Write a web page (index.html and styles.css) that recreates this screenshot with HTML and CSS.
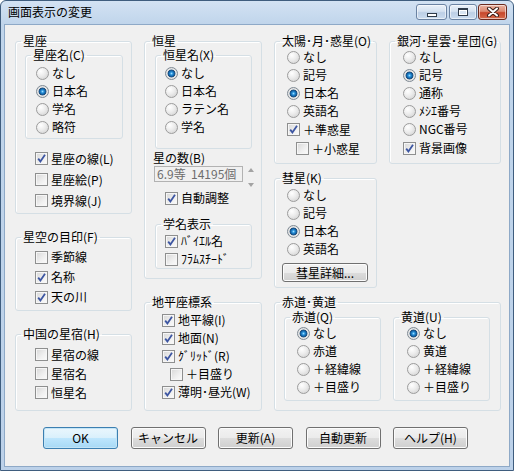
FILE: index.html
```html
<!DOCTYPE html>
<html lang="ja">
<head>
<meta charset="utf-8">
<title>画面表示の変更</title>
<link rel="stylesheet" href="styles.css">
</head>
<body>
<div class="win">
  <div class="titlebar">
    <span class="title">画面表示の変更</span>
    <div class="tbtns">
      <span class="tbtn tmin"><span class="ico-min"></span></span>
      <span class="tbtn tmax"><span class="ico-max"></span></span>
      <span class="tbtn tclose"><svg width="14" height="10" viewBox="0 0 14 10"><path d="M3 1.5 L11 8.5 M11 1.5 L3 8.5" stroke="#3a1d17" stroke-width="4" stroke-linecap="round"/><path d="M3 1.5 L11 8.5 M11 1.5 L3 8.5" stroke="#ffffff" stroke-width="2" stroke-linecap="round"/></svg></span>
    </div>
  </div>
  <div class="client">
    <div class="cols">
      <!-- column 1 -->
      <div class="col c1">
        <fieldset class="grp g-seiza">
          <legend>星座</legend>
          <fieldset class="grp sub s-seizamei">
            <legend>星座名(C)</legend>
            <div class="list pl10 pt2">
              <div class="opt"><span class="rb"></span>なし</div>
              <div class="opt"><span class="rb on"></span>日本名</div>
              <div class="opt"><span class="rb"></span>学名</div>
              <div class="opt"><span class="rb"></span>略符</div>
            </div>
          </fieldset>
          <div class="list pl19 mt9">
            <div class="opt h21"><span class="cb on"><svg width="11" height="11" viewBox="0 0 11 11"><path d="M2.2 5.6 L4.4 8.4 L9 1.8" fill="none" stroke="#3d56a2" stroke-width="1.8"/></svg></span>星座の線(L)</div>
            <div class="opt h21"><span class="cb"></span>星座絵(P)</div>
            <div class="opt h21"><span class="cb"></span>境界線(J)</div>
          </div>
        </fieldset>
        <fieldset class="grp g-mejirushi">
          <legend>星空の目印(F)</legend>
          <div class="list pl19 pt3">
            <div class="opt h20"><span class="cb"></span>季節線</div>
            <div class="opt h20"><span class="cb on"><svg width="11" height="11" viewBox="0 0 11 11"><path d="M2.2 5.6 L4.4 8.4 L9 1.8" fill="none" stroke="#3d56a2" stroke-width="1.8"/></svg></span>名称</div>
            <div class="opt h20"><span class="cb on"><svg width="11" height="11" viewBox="0 0 11 11"><path d="M2.2 5.6 L4.4 8.4 L9 1.8" fill="none" stroke="#3d56a2" stroke-width="1.8"/></svg></span>天の川</div>
          </div>
        </fieldset>
        <fieldset class="grp g-seishuku">
          <legend>中国の星宿(H)</legend>
          <div class="list pl19 pt4">
            <div class="opt h19"><span class="cb"></span>星宿の線</div>
            <div class="opt h19"><span class="cb"></span>星宿名</div>
            <div class="opt h19"><span class="cb"></span>恒星名</div>
          </div>
        </fieldset>
      </div>

      <!-- column 2 -->
      <div class="col c2">
        <fieldset class="grp g-kousei">
          <legend>恒星</legend>
          <fieldset class="grp sub s-kouseimei">
            <legend>恒星名(X)</legend>
            <div class="list pl9 pt2">
              <div class="opt"><span class="rb on"></span>なし</div>
              <div class="opt"><span class="rb"></span>日本名</div>
              <div class="opt"><span class="rb"></span>ラテン名</div>
              <div class="opt"><span class="rb"></span>学名</div>
            </div>
          </fieldset>
          <div class="numlabel">星の数(B)</div>
          <div class="numrow">
            <div class="numbox">6.9等&nbsp;&nbsp;14195個</div>
            <div class="spin"><span class="up"></span><span class="dn"></span></div>
          </div>
          <div class="list pl20 mt7">
            <div class="opt"><span class="cb on"><svg width="11" height="11" viewBox="0 0 11 11"><path d="M2.2 5.6 L4.4 8.4 L9 1.8" fill="none" stroke="#3d56a2" stroke-width="1.8"/></svg></span>自動調整</div>
          </div>
          <fieldset class="grp sub s-gakumei">
            <legend>学名表示</legend>
            <div class="list pl9 pt1">
              <div class="opt"><span class="cb on"><svg width="11" height="11" viewBox="0 0 11 11"><path d="M2.2 5.6 L4.4 8.4 L9 1.8" fill="none" stroke="#3d56a2" stroke-width="1.8"/></svg></span>ﾊﾞｲｴﾙ名</div>
              <div class="opt"><span class="cb"></span>ﾌﾗﾑｽﾁｰﾄﾞ</div>
            </div>
          </fieldset>
        </fieldset>
        <fieldset class="grp g-chihei">
          <legend>地平座標系</legend>
          <div class="list pl17 pt2">
            <div class="opt"><span class="cb on"><svg width="11" height="11" viewBox="0 0 11 11"><path d="M2.2 5.6 L4.4 8.4 L9 1.8" fill="none" stroke="#3d56a2" stroke-width="1.8"/></svg></span>地平線(I)</div>
            <div class="opt"><span class="cb on"><svg width="11" height="11" viewBox="0 0 11 11"><path d="M2.2 5.6 L4.4 8.4 L9 1.8" fill="none" stroke="#3d56a2" stroke-width="1.8"/></svg></span>地面(N)</div>
            <div class="opt"><span class="cb on"><svg width="11" height="11" viewBox="0 0 11 11"><path d="M2.2 5.6 L4.4 8.4 L9 1.8" fill="none" stroke="#3d56a2" stroke-width="1.8"/></svg></span>ｸﾞﾘｯﾄﾞ(R)</div>
            <div class="opt ind8"><span class="cb"></span>＋目盛り</div>
            <div class="opt"><span class="cb on"><svg width="11" height="11" viewBox="0 0 11 11"><path d="M2.2 5.6 L4.4 8.4 L9 1.8" fill="none" stroke="#3d56a2" stroke-width="1.8"/></svg></span>薄明･昼光(W)</div>
          </div>
        </fieldset>
      </div>

      <!-- columns 3 and 4 -->
      <div class="col c34">
        <div class="toprow">
          <fieldset class="grp g-taiyou">
            <legend>太陽･月･惑星(O)</legend>
            <div class="list pl12">
              <div class="opt"><span class="rb"></span>なし</div>
              <div class="opt"><span class="rb"></span>記号</div>
              <div class="opt"><span class="rb on"></span>日本名</div>
              <div class="opt"><span class="rb"></span>英語名</div>
              <div class="opt h19"><span class="cb on"><svg width="11" height="11" viewBox="0 0 11 11"><path d="M2.2 5.6 L4.4 8.4 L9 1.8" fill="none" stroke="#3d56a2" stroke-width="1.8"/></svg></span>＋準惑星</div>
              <div class="opt h19 ind9"><span class="cb"></span>＋小惑星</div>
            </div>
          </fieldset>
          <fieldset class="grp g-ginga">
            <legend>銀河･星雲･星団(G)</legend>
            <div class="list pl13">
              <div class="opt"><span class="rb"></span>なし</div>
              <div class="opt"><span class="rb on"></span>記号</div>
              <div class="opt"><span class="rb"></span>通称</div>
              <div class="opt"><span class="rb"></span>ﾒｼｴ番号</div>
              <div class="opt"><span class="rb"></span>NGC番号</div>
              <div class="opt h20"><span class="cb on"><svg width="11" height="11" viewBox="0 0 11 11"><path d="M2.2 5.6 L4.4 8.4 L9 1.8" fill="none" stroke="#3d56a2" stroke-width="1.8"/></svg></span>背景画像</div>
            </div>
          </fieldset>
        </div>
        <fieldset class="grp g-suisei">
          <legend>彗星(K)</legend>
          <div class="list pl12 pt1">
            <div class="opt"><span class="rb"></span>なし</div>
            <div class="opt"><span class="rb"></span>記号</div>
            <div class="opt"><span class="rb on"></span>日本名</div>
            <div class="opt"><span class="rb"></span>英語名</div>
          </div>
          <button class="btn btn-detail" type="button">彗星詳細...</button>
        </fieldset>
        <fieldset class="grp g-sekidou">
          <legend>赤道･黄道</legend>
          <div class="subrow">
            <fieldset class="grp sub s-ecl">
              <legend>赤道(Q)</legend>
              <div class="list pl12">
                <div class="opt"><span class="rb on"></span>なし</div>
                <div class="opt"><span class="rb"></span>赤道</div>
                <div class="opt"><span class="rb"></span>＋経緯線</div>
                <div class="opt"><span class="rb"></span>＋目盛り</div>
              </div>
            </fieldset>
            <fieldset class="grp sub s-ecl">
              <legend>黄道(U)</legend>
              <div class="list pl13">
                <div class="opt"><span class="rb on"></span>なし</div>
                <div class="opt"><span class="rb"></span>黄道</div>
                <div class="opt"><span class="rb"></span>＋経緯線</div>
                <div class="opt"><span class="rb"></span>＋目盛り</div>
              </div>
            </fieldset>
          </div>
        </fieldset>
      </div>
    </div>

    <div class="btnrow">
      <button class="btn def" type="button">OK</button>
      <button class="btn" type="button">キャンセル</button>
      <button class="btn" type="button">更新(A)</button>
      <button class="btn" type="button">自動更新</button>
      <button class="btn" type="button">ヘルプ(H)</button>
    </div>
  </div>
</div>
</body>
</html>
```
FILE: styles.css
```css
* { box-sizing: border-box; }

html, body {
  margin: 0;
  padding: 0;
  background: #ffffff;
}

body {
  font-family: "Noto Sans CJK JP", "Noto Sans", sans-serif;
  font-size: 12px;
  color: #000000;
}

/* window frame */
.win {
  width: 514px;
  height: 471px;
  border: 1px solid #3f5d7e;
  border-radius: 6px 6px 0 0;
  background: linear-gradient(to bottom, #d3e2f3 0, #c0d5eb 23px, #bcd1e9 100%);
  padding: 0 3px 3px 3px;
  display: flex;
  flex-direction: column;
}

.titlebar {
  height: 23px;
  display: flex;
  align-items: flex-start;
  flex: none;
}

.title {
  margin: 3px 0 0 4px;
  line-height: 16px;
  font-size: 12px;
  color: #000000;
}

.tbtns {
  margin-left: auto;
  margin-top: 3px;
  margin-right: 3px;
  display: flex;
  gap: 1px;
}

.tbtn {
  height: 16px;
  border: 1px solid #6b83a3;
  border-radius: 3px;
  display: flex;
  align-items: center;
  justify-content: center;
  background: linear-gradient(to bottom, #eaf1f9 0, #d5e2f1 45%, #bccfe6 55%, #cbdcef 100%);
  box-shadow: inset 0 0 0 1px rgba(255,255,255,0.55);
}
.tmin { width: 31px; }
.tmax { width: 28px; margin-left: 1px; }
.tclose {
  width: 29px;
  border-color: #6b2a1e;
  background: linear-gradient(to bottom, #eab2a2 0, #dc8a71 45%, #c7472b 55%, #d56b4c 100%);
}

.ico-min {
  width: 10px;
  height: 4px;
  margin-top: 6px;
  border: 1px solid #2f3b4a;
  background: #ffffff;
}
.ico-max {
  width: 10px;
  height: 8px;
  border: 1px solid #2f3b4a;
  border-top-width: 2px;
  background: #d9e5f2;
  box-shadow: inset 0 0 0 1px #ffffff;
}

/* client area */
.client {
  flex: 1;
  background: #f0f0f0;
  border: 1px solid #8ea9c7;
  padding: 9px 0 0 10px;
}

.cols {
  display: flex;
  gap: 12px;
  align-items: flex-start;
}

.col {
  display: flex;
  flex-direction: column;
}
.c1 { width: 117px; gap: 16px; }
.c2 { width: 118px; gap: 16px; }
.c34 { width: 227px; gap: 7px; }

.toprow {
  display: flex;
  gap: 12px;
}

/* group boxes */
.grp {
  margin: 0;
  padding: 0;
  border: 1px solid #d5dfe5;
  border-radius: 3px;
  min-width: 0;
  box-shadow: inset 1px 1px 0 #ffffff;
}

.grp > legend {
  padding: 0 2px;
  margin-left: 5px;
  line-height: 14px;
  height: 14px;
  font-size: 12px;
  white-space: nowrap;
}

.g-seiza { height: 180px; }
.g-mejirushi { height: 81px; }
.g-seishuku { height: 84px; }
.g-kousei { height: 245px; }
.g-chihei { height: 116px; }
.g-taiyou { width: 103px; height: 130px; }
.g-ginga { width: 112px; height: 130px; }
.g-suisei { width: 103px; height: 117px; }
.g-sekidou { width: 227px; height: 116px; }

.s-seizamei { width: 98px; height: 91px; margin-left: 9px; }
.s-kouseimei { width: 97px; height: 101px; margin-left: 10px; }
.s-gakumei { width: 97px; height: 52px; margin-left: 10px; margin-top: 10px; }
.s-ecl { width: 97px; height: 91px; }

.subrow {
  display: flex;
  gap: 12px;
  margin: 1px 0 0 9px;
}

/* option lists */
.list { display: flex; flex-direction: column; }
.pl9 { padding-left: 9px; }
.pl10 { padding-left: 10px; }
.pl12 { padding-left: 12px; }
.pl13 { padding-left: 13px; }
.pl17 { padding-left: 17px; }
.pl19 { padding-left: 19px; }
.pl20 { padding-left: 20px; }
.pt1 { padding-top: 1px; }
.pt2 { padding-top: 2px; }
.pt3 { padding-top: 3px; }
.pt4 { padding-top: 4px; }
.mt7 { margin-top: 7px; }
.mt9 { margin-top: 9px; }

.opt {
  display: flex;
  align-items: center;
  height: 18px;
  line-height: 14px;
  white-space: nowrap;
}
.h19 { height: 19px; }
.h20 { height: 20px; }
.h21 { height: 21px; }
.ind8 { padding-left: 8px; }
.ind9 { padding-left: 9px; }

/* radio */
.rb {
  flex: none;
  width: 13px;
  height: 13px;
  margin-right: 3px;
  border-radius: 50%;
  border: 1px solid #9c9c9c;
  background: radial-gradient(circle at 35% 30%, #ffffff 0, #ececec 45%, #cdcdcd 100%);
}
.rb.on {
  border-color: #7f8a94;
  background: radial-gradient(circle at 50% 50%, #9edcff 0, #2c94db 1.4px, #0f5fa3 2.8px, #27517a 3.6px, #e9e9e9 4.3px, #d0d0d0 100%);
}

/* checkbox */
.cb {
  flex: none;
  width: 13px;
  height: 13px;
  margin-right: 3px;
  border: 1px solid #8e8f8f;
  background: linear-gradient(135deg, #d7d7d7 0, #f0f0f0 60%, #fbfbfb 100%);
  box-shadow: inset 0 0 0 1px #f6f6f6;
  display: flex;
  align-items: center;
  justify-content: center;
}
.cb svg { display: block; }

/* star count */
.numlabel {
  height: 16px;
  line-height: 16px;
  padding-left: 8px;
  margin-top: 1px;
}
.numrow {
  display: flex;
  height: 16px;
  padding-left: 9px;
  align-items: flex-start;
}
.numbox {
  width: 89px;
  height: 16px;
  border: 1px solid #b2b2b2;
  background: #f0f0f0;
  color: #6d6d6d;
  line-height: 14px;
  padding-left: 2px;
  white-space: nowrap;
}
.spin {
  width: 10px;
  height: 19px;
  margin: 2px 0 0 3px;
  display: flex;
  flex-direction: column;
  justify-content: space-between;
  align-items: center;
}
.spin .up {
  width: 0;
  height: 0;
  border-left: 3px solid transparent;
  border-right: 3px solid transparent;
  border-bottom: 4px solid #a3a3a3;
}
.spin .dn {
  width: 0;
  height: 0;
  border-left: 3px solid transparent;
  border-right: 3px solid transparent;
  border-top: 4px solid #a3a3a3;
}

/* push buttons */
.btn {
  font-family: inherit;
  font-size: 12px;
  color: #000000;
  width: 75px;
  height: 22px;
  padding: 0;
  margin: 0;
  border: 1px solid #707070;
  border-radius: 3px;
  background: linear-gradient(to bottom, #f2f2f2 0, #ebebeb 50%, #dddddd 50%, #cfcfcf 100%);
  box-shadow: inset 0 0 0 1px #fcfcfc;
  display: flex;
  align-items: center;
  justify-content: center;
  line-height: 14px;
}
.btn.def {
  border-color: #3c7fb1;
  background: linear-gradient(to bottom, #eaf6fd 0, #d9f0fc 50%, #bee6fd 50%, #a7d9f5 100%);
  box-shadow: inset 0 0 0 1px #c4e5f6;
}
.btn-detail {
  width: 86px;
  height: 19px;
  margin: 5px 0 0 7px;
}

.btnrow {
  display: flex;
  justify-content: center;
  gap: 12.5px;
  margin-top: 16px;
  padding-right: 13px;
}
```
